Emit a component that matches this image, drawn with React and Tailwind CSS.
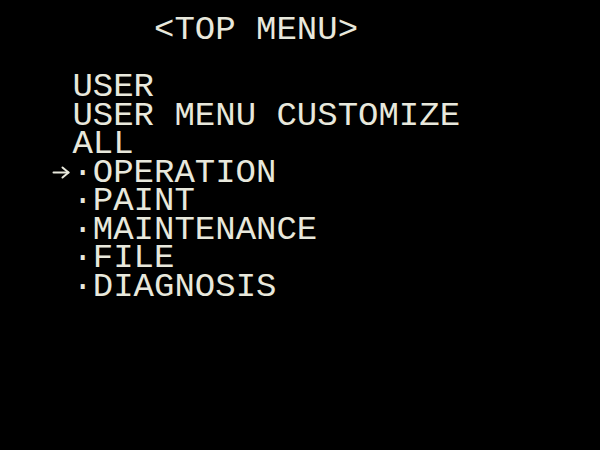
function Arrow() {
  return (
    <span className="inline-block align-top w-[1ch] h-[28.5px]">
      <svg width="20" height="28" viewBox="0 0 20 28" fill="none" stroke="#e8e8dc" strokeWidth="2" strokeLinecap="round" strokeLinejoin="round">
        <path d="M1.5 13.5 H16.5" />
        <path d="M10.5 8.5 L16.5 13.5 L10.5 18.5" />
      </svg>
    </span>
  );
}

export default function App() {
  const items = ["OPERATION", "PAINT", "MAINTENANCE", "FILE", "DIAGNOSIS"];

  return (
    <div className="w-[600px] h-[450px] bg-black overflow-hidden pl-[52px] pt-[16px]">
      <div className="font-['Liberation_Mono',monospace] text-[34px] leading-[28.5px] text-[#e8e8dc]">
        <div className="whitespace-pre h-[28.5px]">{"     <TOP MENU>"}</div>
        <div className="h-[28.5px]" />
        <div className="whitespace-pre h-[28.5px]">{" USER"}</div>
        <div className="whitespace-pre h-[28.5px]">{" USER MENU CUSTOMIZE"}</div>
        <div className="whitespace-pre h-[28.5px]">{" ALL"}</div>
        {items.map((item, i) => (
          <div key={item} className="whitespace-pre h-[28.5px]">
            {i === 0 ? <Arrow /> : " "}
            {"·" + item}
          </div>
        ))}
      </div>
    </div>
  );
}
